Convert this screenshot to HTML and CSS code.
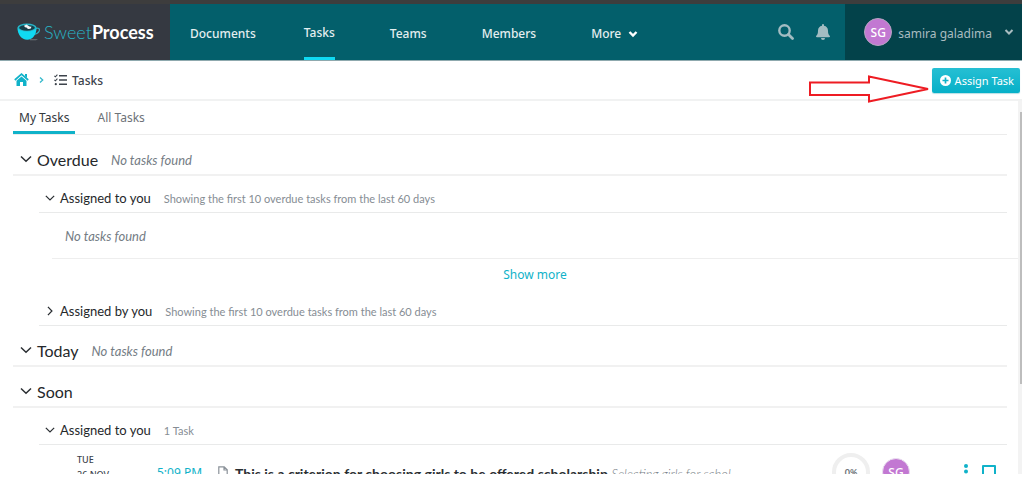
FILE: index.html
```html
<!DOCTYPE html>
<html lang="en">
<head>
<meta charset="utf-8">
<title>Tasks - SweetProcess</title>
<link rel="stylesheet" href="styles.css">
</head>
<body>
<div class="app">
  <header class="topbar">
    <a class="logo" href="#">
      <svg class="logo-cup" width="23" height="18" viewBox="0 0 23 18" aria-hidden="true">
        <path d="M13 16.2h8l-2 1h-6z" fill="#72777d"/>
        <path d="M18 5.5c3.500-1.200 5 .2 4.200 2.400-.8 2-3 3.100-5.500 3.500" fill="none" stroke="#2fa9bb" stroke-width="1.300"/>
        <path d="M0.500 5c0 6.500 4 11.700 9.700 11.700S19.400 11.500 19.500 5z" fill="#10d9f2"/>
        <ellipse cx="10" cy="4.500" rx="9.500" ry="4" fill="#27b5c8"/>
        <ellipse cx="10" cy="4.800" rx="7.900" ry="2.900" fill="#173f4a"/>
        <path d="M7 2.800l2.500-1.300 3 2 2 .3-1 2-2.500.2-1.500-1.500-1.500-.2z" fill="#f4f7f8"/>
      </svg>
      <span class="logo-text">Sweet<b>Process</b></span>
    </a>
    <nav class="nav">
      <a href="#">Documents</a>
      <a class="active" href="#">Tasks</a>
      <a href="#">Teams</a>
      <a href="#">Members</a>
      <a href="#">More
        <svg width="10" height="8" viewBox="0 0 10 8" aria-hidden="true"><path d="M1.500 2L5 5.500 8.500 2" fill="none" stroke="#fff" stroke-width="2.400"/></svg>
      </a>
    </nav>
    <div class="tools">
      <button class="icon-btn" aria-label="Search">
        <svg width="16" height="16" viewBox="0 0 16 16"><circle cx="6.500" cy="6.500" r="5.200" fill="none" stroke="#a3bcc2" stroke-width="2.400"/><path d="M10.500 10.500l4 4" stroke="#a3bcc2" stroke-width="2.800" stroke-linecap="round"/></svg>
      </button>
      <button class="icon-btn" aria-label="Notifications">
        <svg width="14" height="16" viewBox="0 0 14 16"><path d="M7 0a1 1 0 0 1 1 1v.8c2.500.5 4 2.300 4 4.900 0 3 .7 4 1.700 5 .6.700.2 1.600-.7 1.600H1c-.9 0-1.300-.9-.7-1.600 1-1 1.700-2 1.700-5 0-2.600 1.500-4.400 4-4.900V1a1 1 0 0 1 1-1zM5 14h4a2 2 0 0 1-4 0z" fill="#a3bcc2"/></svg>
      </button>
    </div>
    <button class="user">
      <span class="avatar">SG</span>
      <span class="user-name">samira galadima</span>
      <svg width="10" height="8" viewBox="0 0 10 8" aria-hidden="true"><path d="M1.500 2L5 5.500 8.500 2" fill="none" stroke="#a9bcc0" stroke-width="2"/></svg>
    </button>
  </header>

  <div class="crumbs">
    <a href="#" aria-label="Home">
      <svg width="15" height="14" viewBox="0 0 15 14"><path d="M.8 7L7.500 1.200 14.200 7" fill="none" stroke="#10b2c9" stroke-width="1.700"/><path d="M11 1h2v4l-2-1.700z" fill="#10b2c9"/><path d="M2.500 7.800L7.500 3.500l5 4.300V13H9V9H6v4H2.500z" fill="#10b2c9"/></svg>
    </a>
    <svg width="5" height="8" viewBox="0 0 5 8" aria-hidden="true"><path d="M1 1.500L3.700 4 1 6.500" fill="none" stroke="#35b9cb" stroke-width="1.300"/></svg>
    <span class="crumb-current">
      <svg width="13" height="12" viewBox="0 0 13 12" aria-hidden="true"><path d="M.4 1.800l1 1L3.400.6M.4 5.800l1 1L3.400 4.600" fill="none" stroke="#3c434b" stroke-width="1.100"/><circle cx="1.800" cy="10.200" r="1.100" fill="#3c434b"/><path d="M5 1.800h8M5 6h8M5 10.200h8" stroke="#3c434b" stroke-width="1.600"/></svg>
      Tasks
    </span>
    <button class="assign">
      <svg width="11" height="11" viewBox="0 0 11 11" aria-hidden="true"><circle cx="5.500" cy="5.500" r="5.500" fill="#fff"/><path d="M5.500 2.500v6M2.500 5.500h6" stroke="#10b2c9" stroke-width="1.700"/></svg>
      Assign Task
    </button>
    <svg class="pointer" width="123" height="30" viewBox="0 0 123 30" aria-hidden="true"><path d="M2 8.500h59V2.500L120 15 61 27.500V21H2z" fill="none" stroke="#ee1c23" stroke-width="2"/></svg>
  </div>

  <div class="body">
    <main class="content">
      <nav class="tabs">
        <a class="active" href="#">My Tasks</a>
        <a href="#">All Tasks</a>
      </nav>

      <section>
        <h2 class="group"><svg class="chev" viewBox="0 0 12 8"><path d="M1 1.500l5 4.800 5-4.800"/></svg>Overdue <em>No tasks found</em></h2>
        <div class="sub">
          <h3 class="subgroup"><svg class="chev" viewBox="0 0 12 8"><path d="M1 1.500l5 4.800 5-4.800"/></svg>Assigned to you <small>Showing the first 10 overdue tasks from the last 60 days</small></h3>
          <div class="items">
            <p class="empty">No tasks found</p>
            <div class="more"><a href="#">Show more</a></div>
          </div>
          <h3 class="subgroup"><svg class="chev side" viewBox="0 0 12 8"><path d="M1 1.500l5 4.800 5-4.800"/></svg>Assigned by you <small>Showing the first 10 overdue tasks from the last 60 days</small></h3>
        </div>
      </section>

      <section>
        <h2 class="group"><svg class="chev" viewBox="0 0 12 8"><path d="M1 1.500l5 4.800 5-4.800"/></svg>Today <em>No tasks found</em></h2>
      </section>

      <section>
        <h2 class="group"><svg class="chev" viewBox="0 0 12 8"><path d="M1 1.500l5 4.800 5-4.800"/></svg>Soon</h2>
        <div class="sub">
          <h3 class="subgroup"><svg class="chev" viewBox="0 0 12 8"><path d="M1 1.500l5 4.800 5-4.800"/></svg>Assigned to you <small>1 Task</small></h3>
          <div class="task">
            <div class="date">TUE<br>26 NOV</div>
            <div class="time">5:09 PM</div>
            <svg class="doc" width="10" height="13" viewBox="0 0 10 13" aria-hidden="true"><path d="M.8.8h5.400l3 3v8.400H.8zM6 .8V4h3.200" fill="none" stroke="#8b9299" stroke-width="1.200"/></svg>
            <div class="title"><b>This is a criterion for choosing girls to be offered scholarship</b> <i>Selecting girls for schol</i></div>
            <div class="ring">0%</div>
            <div class="avatar light">SG</div>
            <button class="dots" aria-label="Task menu"><svg width="4" height="16" viewBox="0 0 4 16"><g fill="#10b2c9"><circle cx="2" cy="2" r="2"/><circle cx="2" cy="7.500" r="2"/><circle cx="2" cy="13" r="2"/></g></svg></button>
            <input class="check" type="checkbox" aria-label="Complete task">
          </div>
        </div>
      </section>
    </main>
    <div class="track"><div class="thumb"></div></div>
  </div>
</div>
</body>
</html>
```
FILE: styles.css
```css
* { box-sizing: border-box; }
body { margin: 0; background: #fff; color: #2b2f33; font-family: "Noto Sans", "Open Sans", sans-serif; font-size: 13px; }
a { color: inherit; text-decoration: none; }
button { border: 0; padding: 0; background: none; font: inherit; color: inherit; }
svg { flex: none; }
h2, h3, p { margin: 0; font-weight: 400; }

.app { display: flex; flex-direction: column; height: 100vh; padding: 0 2px 6px 0; }

.topbar { display: flex; flex: none; height: 61px; border-top: 4px solid #3d3d3d; border-bottom: 1px solid #8fa9ae; background: #035f6b; }
.logo { display: flex; align-items: center; gap: 4px; width: 170px; padding-left: 17px; background: #353941; }
.logo-text { font-family: Lato, sans-serif; font-size: 18px; color: #28b4c6; font-weight: 300; }
.logo-text b { color: #fff; font-weight: 700; }
.nav { display: flex; gap: 48px; padding-left: 20px; color: #e3eef0; font-weight: 500; font-size: 12px; }
.nav a { display: flex; align-items: center; gap: 7px; padding-top: 3px; }
.nav a + a + a { margin-left: 7px; }
.nav .active { border-bottom: 3px solid #10d9f2; }
.tools { display: flex; align-items: center; gap: 22px; margin-left: auto; padding-right: 15px; }
.icon-btn, .icon-btn svg { display: block; }
.user { display: flex; align-items: center; gap: 6px; padding: 0 8px 0 19px; background: #03424a; color: #a9bcc0; font-size: 12px; }
.user-name { padding: 3px 6px 0 0; }
.avatar { display: flex; align-items: center; justify-content: center; flex: none; width: 28px; height: 28px; border-radius: 50%; border: 1px solid #b5a5c0; background: #c278d2; color: #fff; font-size: 12px; font-weight: 500; }

.crumbs { position: relative; display: flex; flex: none; align-items: center; height: 40px; padding: 0 2px 0 14px; gap: 10px; border-bottom: 2px solid #f1f2f2; }
.crumbs a, .crumbs a svg { display: block; }
.crumb-current { display: flex; align-items: center; gap: 5px; font-size: 12px; font-weight: 500; color: #3c434b; }
.assign { display: flex; align-items: center; gap: 4px; height: 25px; margin-left: auto; padding: 0 6px 0 8px; border-radius: 2px; background: linear-gradient(#26bfd3, #06b0c8); color: #fff; font-size: 11px; box-shadow: 0 1px 1px #b5dfe5; }
.pointer { position: absolute; right: 91px; top: 13px; }

.body { display: flex; flex: 1; min-height: 0; }
.content { flex: 1; overflow: hidden; padding: 0 11px 0 13px; }
.track { width: 4px; padding: 11px 0 0 2px; background: #f3f3f3; }
.thumb { height: 75%; background: #bdbdbd; }

.tabs { display: flex; gap: 16px; height: 34px; border-bottom: 1px solid #ececec; font-size: 12px; color: #6d7277; }
.tabs a { display: flex; align-items: center; height: 33px; padding: 0 6px; }
.tabs .active { color: #33383d; border-bottom: 3px solid #10b2c9; padding-top: 3px; }

.group, .subgroup { display: flex; align-items: center; font-family: Lato, sans-serif; color: #25282b; }
.group { height: 41px; padding: 9px 0 0 7px; border-bottom: 2px solid #f1f1f1; font-size: 16px; }
.group em { margin-left: 13px; padding-top: 2px; font-size: 13px; color: #747c84; }
.chev { width: 12px; height: 8px; margin-right: 5px; fill: none; stroke: #2b2f33; stroke-width: 1.5; }
.side { transform: rotate(-90deg); }
.sub { margin-left: 26px; }
.subgroup { height: 37px; padding: 8px 0 0 6px; border-bottom: 1px solid #e9eaea; font-size: 13px; }
.subgroup .chev { width: 10px; }
.subgroup small { margin-left: 13px; padding-top: 1px; font-size: 11px; color: #868d94; }
.items { margin: 0 -11px 0 13px; }
.empty { height: 46px; padding-left: 13px; border-bottom: 1px solid #eee; font: italic 13px/47px Lato, sans-serif; color: #747c84; }
.more { height: 30px; line-height: 32px; text-align: center; font-size: 12px; color: #10b2c9; }

.task { display: flex; align-items: center; height: 54px; padding-left: 38px; font-family: Lato, sans-serif; }
.date { align-self: flex-start; width: 80px; padding-top: 7px; font: 500 9px/15px "Noto Sans", sans-serif; color: #3c434b; }
.time { width: 61px; font: 12px "Noto Sans", sans-serif; color: #10b2c9; }
.doc { margin-right: 7px; }
.title { flex: 1; min-width: 0; padding-top: 3px; white-space: nowrap; font-size: 14px; }
.title i { font-weight: 300; color: #747c84; font-size: 13px; }
.ring { display: flex; align-items: center; justify-content: center; width: 38px; height: 38px; border: 4px solid #efefef; border-radius: 50%; font-size: 9px; font-weight: 700; color: #6d7277; }
.light { margin: 0 54px 0 12px; border: 1px solid #eadff0; font-family: "Noto Sans", sans-serif; }
.dots, .dots svg { display: block; }
.check { appearance: none; width: 14px; height: 14px; margin: 0 11px 0 14px; border: 2px solid #10b2c9; border-radius: 1px; }
```
